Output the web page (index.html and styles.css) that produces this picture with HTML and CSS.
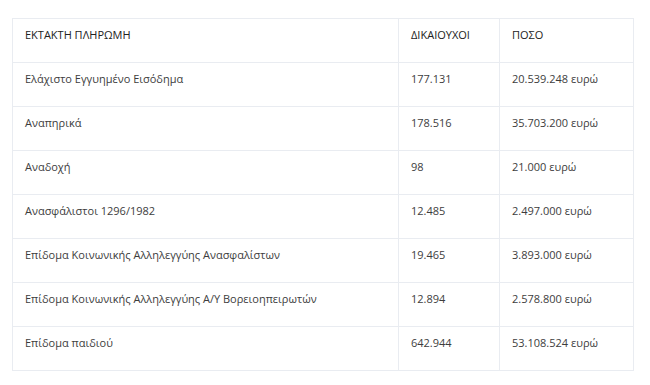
FILE: index.html
```html
<!DOCTYPE html>
<html lang="el">
<head>
<meta charset="utf-8">
<link rel="stylesheet" href="styles.css">
</head>
<body>
<div class="wrap">
<table class="pay">
<colgroup><col class="c1"><col class="c2"><col class="c3"></colgroup>
<thead>
<tr><th>ΕΚΤΑΚΤΗ ΠΛΗΡΩΜΗ</th><th>ΔΙΚΑΙΟΥΧΟΙ</th><th>ΠΟΣΟ</th></tr>
</thead>
<tbody>
<tr><td>Ελάχιστο Εγγυημένο Εισόδημα</td><td>177.131</td><td>20.539.248 ευρώ</td></tr>
<tr><td>Αναπηρικά</td><td>178.516</td><td>35.703.200 ευρώ</td></tr>
<tr><td>Αναδοχή</td><td>98</td><td>21.000 ευρώ</td></tr>
<tr><td>Ανασφάλιστοι 1296/1982</td><td>12.485</td><td>2.497.000 ευρώ</td></tr>
<tr><td>Επίδομα Κοινωνικής Αλληλεγγύης Ανασφαλίστων</td><td>19.465</td><td>3.893.000 ευρώ</td></tr>
<tr><td>Επίδομα Κοινωνικής Αλληλεγγύης Α/Υ Βορειοηπειρωτών</td><td>12.894</td><td>2.578.800 ευρώ</td></tr>
<tr><td>Επίδομα παιδιού</td><td>642.944</td><td>53.108.524 ευρώ</td></tr>
</tbody>
</table>
</div>
</body>
</html>
```
FILE: styles.css
```css
html, body {
  margin: 0;
  padding: 0;
  background: #ffffff;
}
.wrap {
  padding: 18px 17px 0 12px;
}
.pay {
  width: 621px;
  border-collapse: collapse;
  table-layout: fixed;
  font-family: "Open Sans", "Noto Sans", sans-serif;
  font-size: 11px;
  line-height: 18px;
  color: #3d3d3d;
}
.c1 { width: 386px; }
.c2 { width: 101px; }
.c3 { width: 134px; }
.pay th, .pay td {
  border: 1px solid #e9ecf1;
  height: 44px;
  box-sizing: border-box;
  padding: 7px 12px 0 12px;
  vertical-align: top;
  text-align: left;
  font-weight: normal;
  white-space: nowrap;
}
.pay th {
  color: #222222;
  font-weight: 500;
}
```
